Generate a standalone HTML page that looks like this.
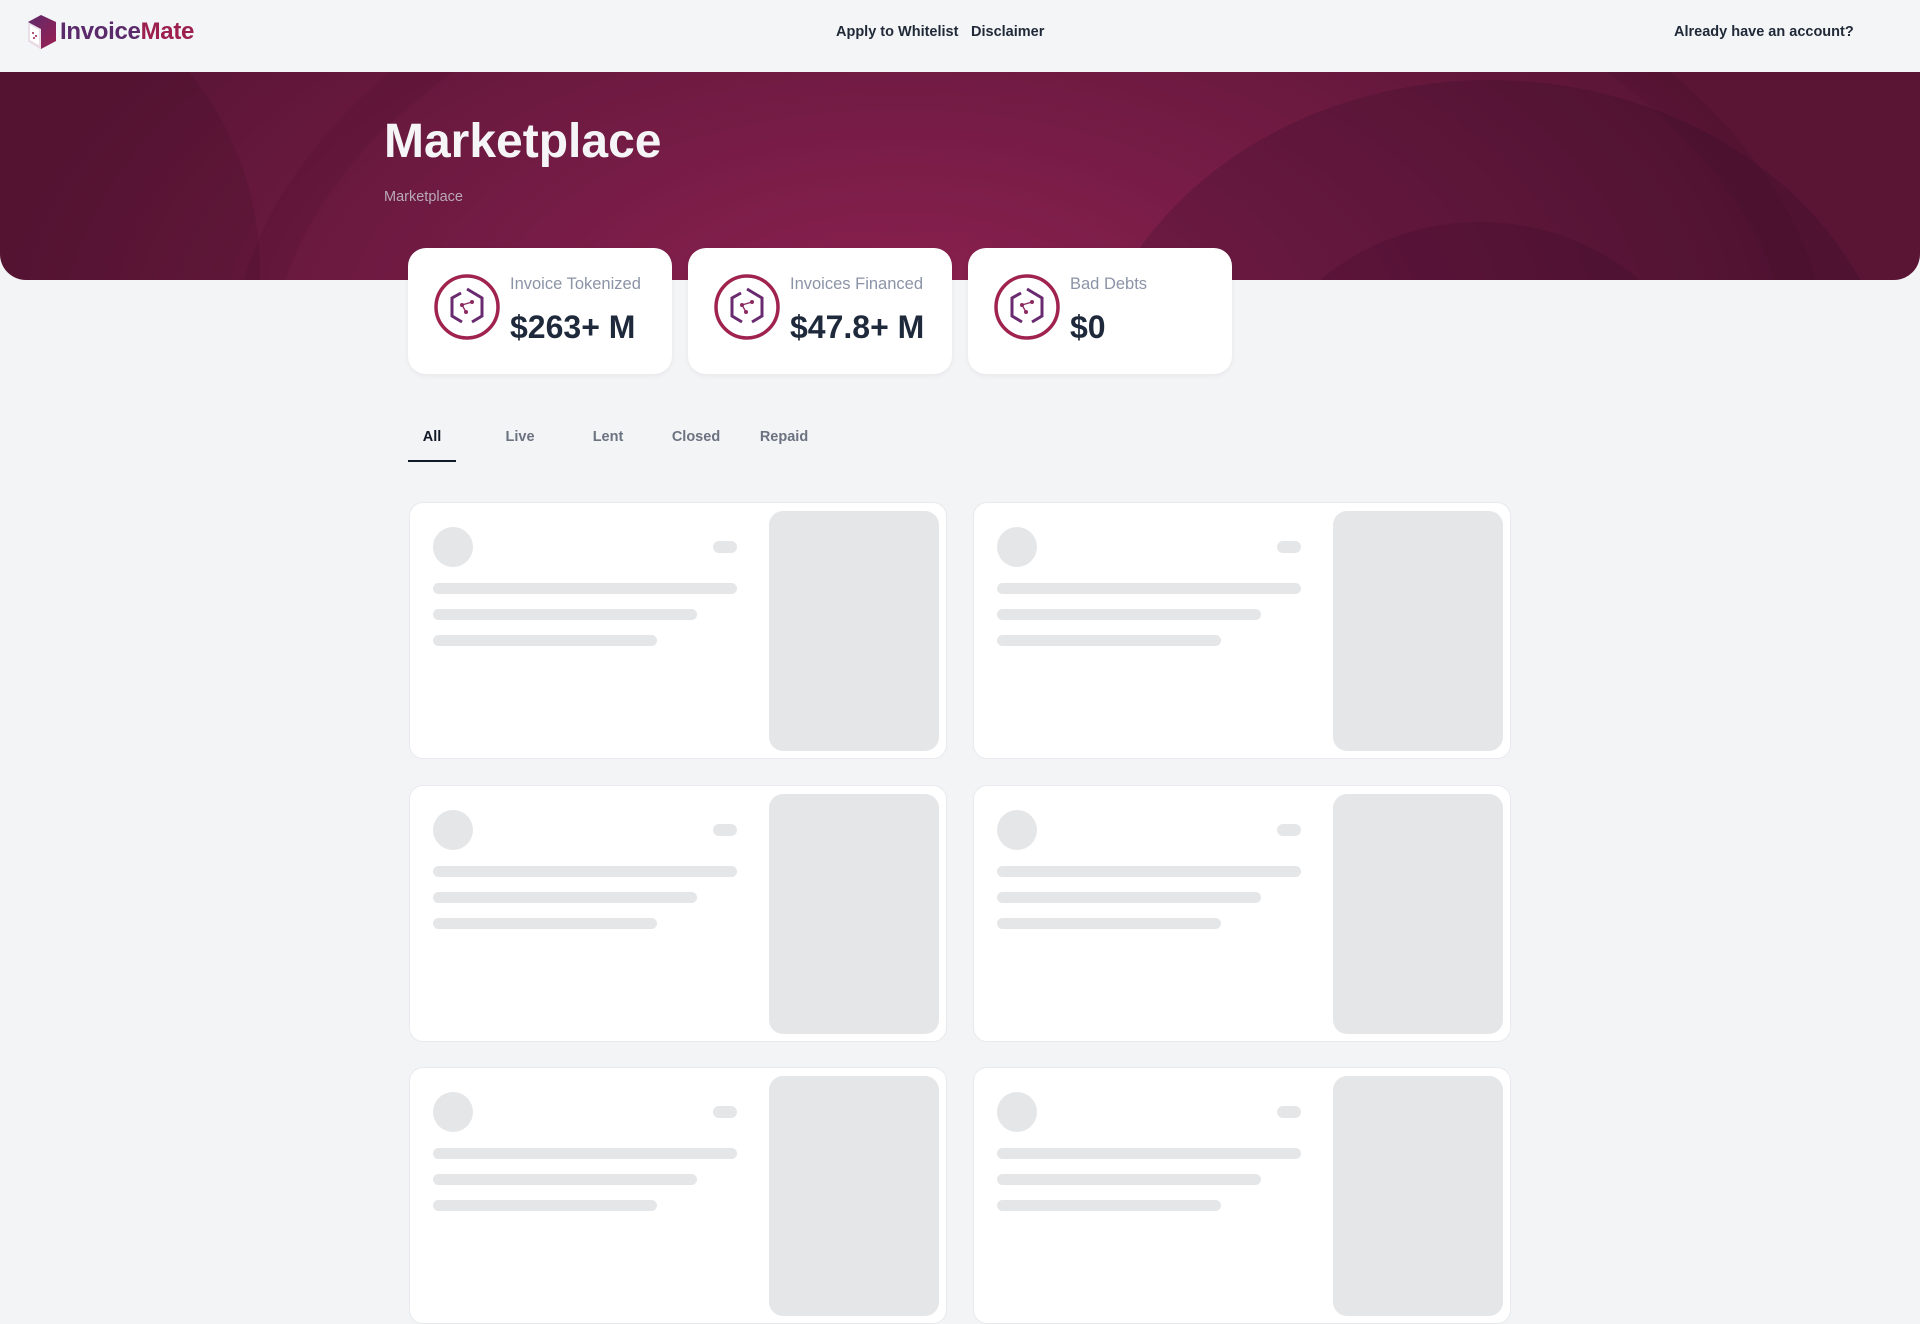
<!DOCTYPE html>
<html><head><meta charset="utf-8"><style>
*{box-sizing:border-box;margin:0;padding:0}
body{width:1920px;height:1080px;overflow:hidden;background:#f3f4f6;font-family:"Liberation Sans",sans-serif;position:relative}
.hdr{position:absolute;top:0;left:0;width:1920px;height:72px;background:#f4f5f7}
.nav{position:absolute;top:24px;font-size:14.5px;font-weight:bold;color:#1f2937}
.hero{position:absolute;top:72px;left:0;width:1920px;height:208px;border-radius:0 0 26px 26px;overflow:hidden;
background:radial-gradient(ellipse 900px 480px at 900px 260px,#8e2150 0%,#761c46 45%,#5a1535 100%)}
.arc{position:absolute;border-radius:50%}
.title{position:absolute;left:384px;top:114px;font-size:48px;font-weight:bold;color:#f5f5f7}
.sub{position:absolute;left:384px;top:189px;font-size:14.5px;color:#b8aab8}
.card{position:absolute;top:248px;width:264px;height:126px;background:#fff;border-radius:18px;box-shadow:0 2px 6px rgba(0,0,0,.05)}
.card svg{position:absolute;left:24px;top:24px}
.lab{position:absolute;left:102px;top:27px;font-size:16.5px;color:#8b93a6}
.val{position:absolute;left:102px;top:61px;font-size:32px;font-weight:bold;color:#1e293b}
.tab{position:absolute;top:429px;font-size:14.5px;font-weight:bold;color:#6b7280;transform:translateX(-50%)}
.sk{position:absolute;width:538px;height:257px;background:#fff;border:1px solid #e8e9ec;border-radius:14px}
.sk i{position:absolute;background:#e5e6e8;display:block}
</style></head><body>
<div class="hdr">
<svg style="position:absolute;left:25px;top:14px" width="33" height="36" viewBox="0 0 33 36"><defs><linearGradient id="lg" x1="0" y1="0" x2="1" y2="1"><stop offset="0" stop-color="#5b2a6b"/><stop offset="1" stop-color="#9c1f50"/></linearGradient></defs><path d="M3 8 L16 1 L31 8 L31 27 L16 35 L3 27 Z" fill="url(#lg)"/><path d="M3 8 L16 15 L16 35 L3 27Z" fill="#fff" opacity=".85"/><path d="M5 11 L14 16 L14 31 L5 26Z" fill="#fff"/><circle cx="8" cy="19" r="1" fill="#9c1f50"/><circle cx="11" cy="22" r="1" fill="#9c1f50"/><circle cx="9" cy="24" r="1" fill="#9c1f50"/></svg>
<div style="position:absolute;left:60px;top:18px;font-size:24px;font-weight:bold;color:#5b2a6b;letter-spacing:-.3px">Invoice<span style="color:#9c1f50">Mate</span></div>
<div class="nav" style="left:836px">Apply to Whitelist</div>
<div class="nav" style="left:971px">Disclaimer</div>
<div class="nav" style="left:1674px">Already have an account?</div>
</div>
<div class="hero">
<div class="arc" style="left:230px;top:-200px;width:1600px;height:1000px;border:40px solid rgba(0,0,0,.05)"></div>
<div class="arc" style="left:1080px;top:8px;width:820px;height:700px;background:rgba(40,10,35,.2)"></div>
<div class="arc" style="left:1230px;top:150px;width:500px;height:500px;background:rgba(40,10,35,.15)"></div>
<div class="arc" style="left:-300px;top:-100px;width:560px;height:600px;background:rgba(40,5,25,.12)"></div>
</div>
<div class="title">Marketplace</div>
<div class="sub">Marketplace</div>

<div class="card" style="left:408px"><svg width="70" height="70" viewBox="0 0 70 70"><circle cx="35" cy="35" r="31" fill="#fff" stroke="#a0234f" stroke-width="3.5"/><path d="M35 17 L50 26 L50 44 L40 50 M30 50 L20 44 L20 26 L29 21" fill="none" stroke="#6a2a70" stroke-width="3"/><circle cx="30" cy="33" r="2" fill="#8a2a60"/><circle cx="40" cy="30" r="2" fill="#8a2a60"/><circle cx="34" cy="40" r="2" fill="#8a2a60"/><path d="M30 33 L40 30 M30 33 L34 40" stroke="#8a2a60" stroke-width="1.3"/></svg><div class="lab">Invoice Tokenized</div><div class="val">$263+ M</div></div>
<div class="card" style="left:688px"><svg width="70" height="70" viewBox="0 0 70 70"><circle cx="35" cy="35" r="31" fill="#fff" stroke="#a0234f" stroke-width="3.5"/><path d="M35 17 L50 26 L50 44 L40 50 M30 50 L20 44 L20 26 L29 21" fill="none" stroke="#6a2a70" stroke-width="3"/><circle cx="30" cy="33" r="2" fill="#8a2a60"/><circle cx="40" cy="30" r="2" fill="#8a2a60"/><circle cx="34" cy="40" r="2" fill="#8a2a60"/><path d="M30 33 L40 30 M30 33 L34 40" stroke="#8a2a60" stroke-width="1.3"/></svg><div class="lab">Invoices Financed</div><div class="val">$47.8+ M</div></div>
<div class="card" style="left:968px"><svg width="70" height="70" viewBox="0 0 70 70"><circle cx="35" cy="35" r="31" fill="#fff" stroke="#a0234f" stroke-width="3.5"/><path d="M35 17 L50 26 L50 44 L40 50 M30 50 L20 44 L20 26 L29 21" fill="none" stroke="#6a2a70" stroke-width="3"/><circle cx="30" cy="33" r="2" fill="#8a2a60"/><circle cx="40" cy="30" r="2" fill="#8a2a60"/><circle cx="34" cy="40" r="2" fill="#8a2a60"/><path d="M30 33 L40 30 M30 33 L34 40" stroke="#8a2a60" stroke-width="1.3"/></svg><div class="lab">Bad Debts</div><div class="val">$0</div></div>

<div class="tab" style="left:432px;color:#111827">All</div>
<div style="position:absolute;left:408px;top:460px;width:48px;height:2px;background:#111827"></div>
<div class="tab" style="left:520px">Live</div>
<div class="tab" style="left:608px">Lent</div>
<div class="tab" style="left:696px">Closed</div>
<div class="tab" style="left:784px">Repaid</div>

<div id="g"></div>
<script>
var h='';[[409,502],[973,502],[409,785],[973,785],[409,1067],[973,1067]].forEach(function(p){
h+='<div class="sk" style="left:'+p[0]+'px;top:'+p[1]+'px">'+
'<i style="left:23px;top:24px;width:40px;height:40px;border-radius:50%"></i>'+
'<i style="left:303px;top:38px;width:24px;height:12px;border-radius:6px"></i>'+
'<i style="left:23px;top:80px;width:304px;height:11px;border-radius:6px"></i>'+
'<i style="left:23px;top:106px;width:264px;height:11px;border-radius:6px"></i>'+
'<i style="left:23px;top:132px;width:224px;height:11px;border-radius:6px"></i>'+
'<i style="left:359px;top:8px;width:170px;height:240px;border-radius:14px"></i></div>';});
document.getElementById('g').innerHTML=h;
</script>
</body></html>
